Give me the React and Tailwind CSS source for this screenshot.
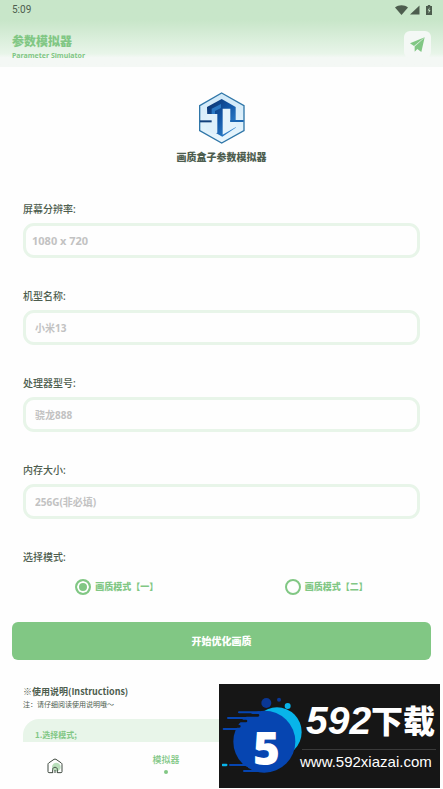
import React, { useState } from "react";

const fields = [
    { id: "resolution", label: "屏幕分辨率:", placeholder: "1080 x 720", style: "px-[6px] text-[11px]" },
    { id: "model", label: "机型名称:", placeholder: "小米13", style: "px-[9px] text-[10px]" },
    { id: "cpu", label: "处理器型号:", placeholder: "骁龙888", style: "px-[9px] text-[10px]" },
    { id: "memory", label: "内存大小:", placeholder: "256G(非必填)", style: "px-[9px] text-[10px]" },
];

const modes = [
    { value: "one", label: "画质模式【一】" },
    { value: "two", label: "画质模式【二】" },
];

const StatusBar = () => (
    <div className="flex h-5 items-center justify-between pl-3 pr-[11px] text-[#4d5d4e]">
        <span className="text-[10px] leading-5 font-['Roboto',sans-serif]">5:09</span>
        <div className="flex items-center">
            <svg width="13" height="10" viewBox="0 0 13 10" fill="currentColor">
                <path d="M0 2.6C3.6-.6 9.4-.6 13 2.6L6.5 10z" />
            </svg>
            <svg width="10" height="10" viewBox="0 0 10 10" fill="currentColor" className="ml-[2px]">
                <path d="M9.500 .5v9H0z" />
            </svg>
            <svg width="6" height="10" viewBox="0 0 6 10" className="ml-[6px]">
                <path d="M1.800 0h2.400v1H6v9H0V1h1.800z" fill="currentColor" />
                <path d="M3.600 2.200 1.700 5.600h1.200L2.500 8.600l2-3.500H3.200z" fill="#c8e6c9" />
            </svg>
        </div>
    </div>
);

const HexLogo = () => (
    <svg width="46" height="52" viewBox="0 0 138 156" role="img" aria-label="logo">
        <defs>
            <linearGradient id="deep" x1="0" y1="0" x2="1" y2="1">
                <stop offset="0" stopColor="#0b2f68" />
                <stop offset="0.5" stopColor="#1257a8" />
                <stop offset="1" stopColor="#3d92d8" />
            </linearGradient>
            <linearGradient id="pale" x1="0" y1="0" x2="0" y2="1">
                <stop offset="0" stopColor="#cfe8f8" />
                <stop offset="1" stopColor="#e9f6fd" />
            </linearGradient>
        </defs>
        <path d="M68 3 135 41v75l-67 37L2 116V41z" fill="url(#pale)" stroke="#2f76a8" strokeWidth="4" />
        <path d="M24 45 68 21l42 24v62l-40 27-44-25z" fill="url(#deep)" />
        {/* S: bar and the turn down to the bowl */}
        <path d="M22 66h33v56l-12 4-21-12z" fill="#dff0fb" />
        <path d="M3 85h35v6H3z" fill="#12407c" />
        <path d="M38 50 66 36v12L48 57v9H38z" fill="#2a78c4" />
        {/* L: stem and foot */}
        <path d="M71 50 94 50v40h18v14l-41 24z" fill="#e4f3fc" />
        <path d="M94 84h40v6H94z" fill="#1c66b2" />
    </svg>
);

const HomeIcon = () => (
    <svg width="16" height="16" viewBox="0 0 48 48" fill="none">
        <circle cx="28" cy="27" r="13" fill="#b9dfbb" />
        <path d="M17 44H6c-2 0-3-1-3-3V19c0-2 1-3 2-4L21 4c2-1 4-1 6 0l16 11c1 1 2 2 2 4v22c0 2-1 3-3 3H31" stroke="#3f4a40" strokeWidth="3" />
        <path d="M17 45V34c0-8 14-8 14 0v11M24 36v9" stroke="#3f4a40" strokeWidth="3" />
    </svg>
);

const Header = () => (
    <header className="bg-linear-to-b from-[#c8e6c9] from-30% via-[#e8f5e9] via-80% to-[#f4f8f5] to-86%">
        <StatusBar />
        <div className="flex items-center justify-between pt-1 pb-[6px] pl-3 pr-3">
            <div>
                <h1 className="mt-[10px] text-[12px] leading-4 font-black text-[#81c784]">参数模拟器</h1>
                <p className="text-[7px] leading-[11px] font-bold text-[#81c784] font-['Noto_Sans',sans-serif]">Parameter Simulator</p>
            </div>
            <button type="button" aria-label="分享" className="mt-1 flex size-[27px] items-center justify-center rounded-md bg-[#f4f8f5]">
                <svg width="15" height="15" viewBox="0 0 45 45" fill="#81c784">
                    <path d="M44 1 0 19l12 8z" />
                    <path d="M44 1 14 28v16l8-8 12 9z" />
                    <path d="M40 5 14 28" fill="none" stroke="#f4f8f5" strokeWidth="1" />
                </svg>
            </button>
        </div>
    </header>
);

const Field = ({ id, label, placeholder, style }) => (
    <div className="flex flex-col gap-[6px]">
        <label htmlFor={id} className="text-[10px] leading-4 font-medium text-[#4d5d4e]">{label}</label>
        <input
            id={id}
            type="text"
            placeholder={placeholder}
            className={`h-[35px] w-full rounded-[11px] border-3 border-[#e8f5e9] font-bold text-[#4d5d4e] outline-none placeholder:text-[#c2c2c2] ${style}`}
        />
    </div>
);

const Banner = () => (
    <div className="absolute right-[3px] bottom-px flex h-[104px] w-[221px] items-center bg-[#161616] text-white">
        <div className="relative ml-[3px] w-[76px] shrink-0">
            <svg width="80" height="80" viewBox="0 0 240 240" className="max-w-none">
                <circle cx="165" cy="108" r="74" fill="#08b4ea" />
                <circle cx="127" cy="137" r="93" fill="#0645b1" />
                <g stroke="#161616" strokeWidth="8" strokeLinecap="round">
                    <path d="M20 58h88M10 75h62M10 91h42M30 216h44M40 198h-20" />
                </g>
                <g stroke="#0645b1" strokeWidth="6" strokeLinecap="round">
                    <path d="M51 49h60M18 66h60M5 99h55M24 207h70M66 225h78" />
                </g>
                <path d="M2 207h11" stroke="#08b4ea" strokeWidth="7" strokeLinecap="round" />
                <circle cx="133" cy="21" r="15" fill="#0a3794" />
                <circle cx="171" cy="11" r="6" fill="#0a3794" />
                <circle cx="197" cy="30" r="9" fill="#08b4ea" />
            </svg>
            <span className="absolute top-[28px] left-[31px] text-[46px] leading-[46px] font-extrabold font-['Open_Sans',sans-serif]">5</span>
        </div>
        <div className="flex flex-1 flex-col">
            <p className="flex items-center pl-2 leading-[44px] whitespace-nowrap">
                <span className="text-[39px] font-bold italic font-['Liberation_Sans',sans-serif]">592</span>
                <span className="text-[32px] font-black">下载</span>
            </p>
            <hr className="mt-[6px] mr-1 ml-1 border-[#3a3a3a]" />
            <a href="#home" className="pl-[2px] text-[15px] leading-6 whitespace-nowrap font-['Liberation_Sans',sans-serif]">www.592xiazai.com</a>
        </div>
    </div>
);

const App = () => {
    const [mode, setMode] = useState("one");

    return (
        <div className="relative flex h-screen flex-col overflow-hidden bg-[#fefefe] font-['Noto_Sans','Noto_Sans_CJK_SC',sans-serif]">
            <Header />
            <main className="min-h-0 flex-1 overflow-y-auto px-3 [scrollbar-width:none]">
                <div className="flex flex-col items-center gap-[5px] pt-[25px]">
                    <HexLogo />
                    <h2 className="text-[10px] leading-4 font-black text-[#4d5d4e]">画质盒子参数模拟器</h2>
                </div>

                <form onSubmit={(e) => e.preventDefault()} className="pt-9">
                    <div className="flex flex-col gap-[30px] px-[11px]">
                        {fields.map((el) => (
                            <Field key={el.id} {...el} />
                        ))}
                    </div>

                    <fieldset className="pt-[30px]">
                        <legend className="float-left w-full px-[11px] text-[10px] leading-4 font-medium text-[#4d5d4e]">选择模式:</legend>
                        <div className="clear-both grid grid-cols-2 pt-[14px]">
                            {modes.map((el) => (
                                <label key={el.value} className="flex items-center justify-center gap-1 text-[9px] leading-4 font-black text-[#81c784]">
                                    <input
                                        type="radio"
                                        name="mode"
                                        value={el.value}
                                        checked={mode === el.value}
                                        onChange={() => setMode(el.value)}
                                        className="size-4 appearance-none rounded-full border-2 border-[#81c784] checked:bg-[#81c784] checked:shadow-[inset_0_0_0_2px_#fff]"
                                    />
                                    {el.label}
                                </label>
                            ))}
                        </div>
                    </fieldset>

                    <button type="submit" className="mt-[27px] h-[38px] w-full rounded-md bg-[#81c784] text-[10px] font-black text-white">
                        开始优化画质
                    </button>
                </form>

                <section className="px-[11px] pt-6 font-['Noto_Sans_CJK_SC',sans-serif]">
                    <h3 className="text-[9px] leading-4 font-bold text-[#4d5d4e]">※使用说明(Instructions)</h3>
                    <p className="text-[7px] leading-2 text-[#4d5d4e]">注：请仔细阅读使用说明哦～</p>
                    <div className="mt-[11px] rounded-[16px] bg-[#e8f5e9] px-3 pt-2 pb-6 text-[8px] leading-4 font-bold text-[#81c784]">
                        1.选择模式;
                    </div>
                </section>
            </main>

            <nav className="grid h-[47px] grid-cols-4 bg-[#fefefe]">
                <a href="#home" aria-label="首页" className="flex items-center justify-center">
                    <HomeIcon />
                </a>
                <a href="#simulator" className="flex flex-col items-center justify-center gap-1 pb-1 text-[9px] leading-3 font-medium text-[#81c784]">
                    模拟器
                    <span className="size-1 rounded-full bg-[#81c784]" />
                </a>
            </nav>
            <Banner />
        </div>
    );
};

export default App;
